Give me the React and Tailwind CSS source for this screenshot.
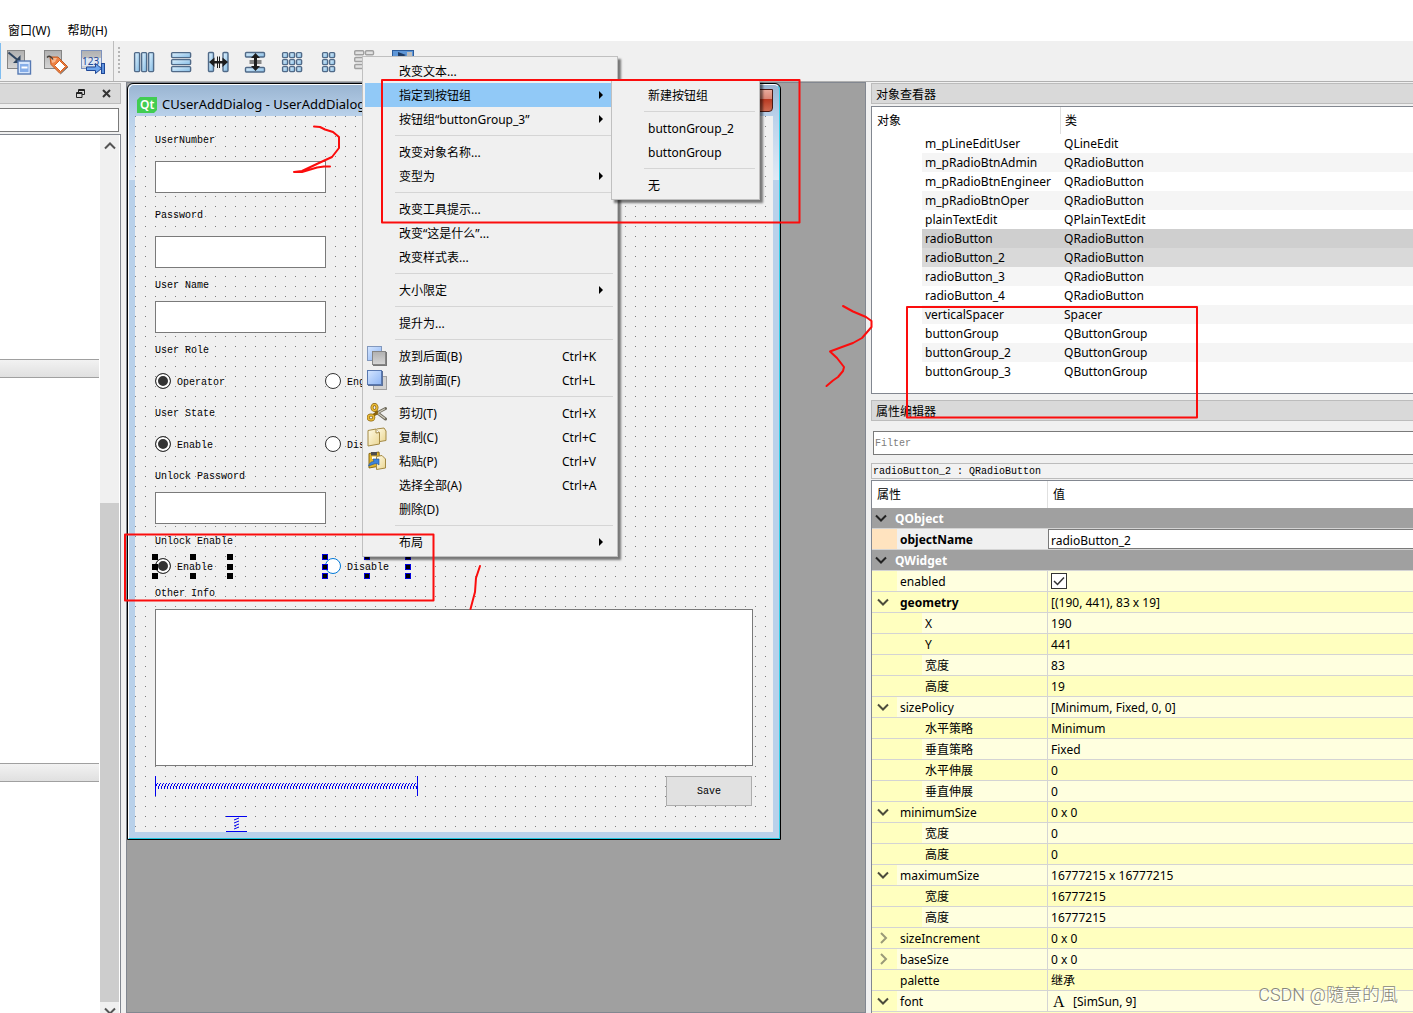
import React from 'react';

const objects = [
  ['m_pLineEditUser', 'QLineEdit'],
  ['m_pRadioBtnAdmin', 'QRadioButton'],
  ['m_pRadioBtnEngineer', 'QRadioButton'],
  ['m_pRadioBtnOper', 'QRadioButton'],
  ['plainTextEdit', 'QPlainTextEdit'],
  ['radioButton', 'QRadioButton', 'bg-[#cfcfcf]'],
  ['radioButton_2', 'QRadioButton', 'bg-[#d9d9d9]'],
  ['radioButton_3', 'QRadioButton'],
  ['radioButton_4', 'QRadioButton'],
  ['verticalSpacer', 'Spacer'],
  ['buttonGroup', 'QButtonGroup'],
  ['buttonGroup_2', 'QButtonGroup'],
  ['buttonGroup_3', 'QButtonGroup'],
];

const properties = [
  { name: 'enabled', check: true },
  { name: 'geometry', value: '[(190, 441), 83 x 19]', open: true, bold: true },
  { name: 'X', value: '190', child: true },
  { name: 'Y', value: '441', child: true },
  { name: '宽度', value: '83', child: true },
  { name: '高度', value: '19', child: true },
  { name: 'sizePolicy', value: '[Minimum, Fixed, 0, 0]', open: true },
  { name: '水平策略', value: 'Minimum', child: true },
  { name: '垂直策略', value: 'Fixed', child: true },
  { name: '水平伸展', value: '0', child: true },
  { name: '垂直伸展', value: '0', child: true },
  { name: 'minimumSize', value: '0 x 0', open: true },
  { name: '宽度', value: '0', child: true },
  { name: '高度', value: '0', child: true },
  { name: 'maximumSize', value: '16777215 x 16777215', open: true },
  { name: '宽度', value: '16777215', child: true },
  { name: '高度', value: '16777215', child: true },
  { name: 'sizeIncrement', value: '0 x 0', closed: true },
  { name: 'baseSize', value: '0 x 0', closed: true },
  { name: 'palette', value: '继承' },
  { name: 'font', value: '[SimSun, 9]', open: true, glyph: 'A' },
];

const contextMenu = [
  { text: '改变文本...' },
  { text: '指定到按钮组', sub: true, active: true },
  { text: '按钮组“buttonGroup_3”', sub: true },
  null,
  { text: '改变对象名称...' },
  { text: '变型为', sub: true },
  null,
  { text: '改变工具提示...' },
  { text: '改变“这是什么”...' },
  { text: '改变样式表...' },
  null,
  { text: '大小限定', sub: true },
  null,
  { text: '提升为...' },
  null,
  { text: '放到后面(B)', keys: 'Ctrl+K', icon: 'back' },
  { text: '放到前面(F)', keys: 'Ctrl+L', icon: 'front' },
  null,
  { text: '剪切(T)', keys: 'Ctrl+X', icon: 'cut' },
  { text: '复制(C)', keys: 'Ctrl+C', icon: 'copy' },
  { text: '粘贴(P)', keys: 'Ctrl+V', icon: 'paste' },
  { text: '选择全部(A)', keys: 'Ctrl+A' },
  { text: '删除(D)' },
  null,
  { text: '布局', sub: true },
];

const groupMenu = [
  { text: '新建按钮组' },
  null,
  { text: 'buttonGroup_2' },
  { text: 'buttonGroup' },
  null,
  { text: '无' },
];

/* ---------- icons ---------- */

function Gradients() {
  return (
    <svg className="absolute h-0 w-0" aria-hidden="true">
      <defs>
        <linearGradient id="blueBar" x1="0" y1="0" x2="1" y2="1">
          <stop offset="0" stopColor="#e2f4ff" />
          <stop offset="1" stopColor="#84bbe4" />
        </linearGradient>
        <linearGradient id="grayBox" x1="0" y1="0" x2="0" y2="1">
          <stop offset="0" stopColor="#b0b0b0" />
          <stop offset="1" stopColor="#d6d6d6" />
        </linearGradient>
        <linearGradient id="blueBox" x1="0" y1="0" x2="1" y2="1">
          <stop offset="0" stopColor="#d5e6ff" />
          <stop offset="1" stopColor="#8db5f5" />
        </linearGradient>
        <linearGradient id="paper" x1="0" y1="0" x2="1" y2="1">
          <stop offset="0" stopColor="#fffbe6" />
          <stop offset="1" stopColor="#ead591" />
        </linearGradient>
      </defs>
    </svg>
  );
}

function EditWidgetsIcon() {
  return (
    <svg width="25" height="25" viewBox="0 0 25 25">
      <rect x="0.500" y="0.500" width="17" height="18" fill="url(#grayBox)" stroke="#858585" />
      <path d="M1.500 2.500L10 9.500" stroke="#2f4560" strokeWidth="2" fill="none" />
      <path d="M13.500 13H6L13.500 5Z" fill="#2f4560" />
      <rect x="11" y="11" width="12.500" height="13" fill="#d7e7fd" stroke="#5679b3" strokeWidth="1.400" />
      <rect x="13" y="14" width="8.500" height="8" fill="#86aee9" />
      <path d="M14.500 17.500H20.500" stroke="#fff" strokeWidth="2" />
    </svg>
  );
}

function EditBuddiesIcon() {
  return (
    <svg width="25" height="25" viewBox="0 0 25 25">
      <rect x="0.500" y="0.500" width="17" height="18" fill="url(#grayBox)" stroke="#858585" />
      <path d="M6 7H14L23.500 16.500L16 23.500L7 14.500Z" fill="#ee8244" stroke="#c05a22" strokeLinejoin="round" />
      <path d="M7 8H13L11 12L8 13Z" fill="#f7b78f" />
      <path d="M10.500 15.500L15.500 10.500L21.500 16.500L16.500 21.500Z" fill="#fff" stroke="#d9611f" />
      <path d="M16.500 24L24 17" stroke="#6f6f6f" />
      <path d="M3 7.500C5 5.500 7 6 9 9.500" stroke="#453f3a" strokeWidth="1.500" fill="none" />
    </svg>
  );
}

function TabOrderIcon() {
  return (
    <svg width="25" height="25" viewBox="0 0 25 25">
      <rect x="0.500" y="0.500" width="20" height="18" fill="url(#grayBox)" stroke="#7d92bd" />
      <rect x="1" y="8" width="19" height="8" fill="#dfe7f2" />
      <text x="1" y="15" fontSize="10" fontFamily="Noto Sans, sans-serif" fill="#1f4796">123</text>
      <path d="M5.500 17H14.500V13.500L20.500 18.500L14.500 23.500V20.500H5.500Z" fill="#6ea5ec" stroke="#1f4796" />
      <rect x="20.500" y="13.500" width="3" height="10" fill="#5f93de" stroke="#1f4796" />
    </svg>
  );
}

function Bars({ rects }) {
  return (
    <svg width="24" height="24" viewBox="0 0 24 24">
      {rects.map(([x, y, w, h], i) => (
        <rect key={i} x={x + 0.6} y={y + 0.6} width={w - 1} height={h - 1} rx="1" fill="url(#blueBar)" stroke="#506a88" strokeWidth="1.400" />
      ))}
    </svg>
  );
}

const gridOf = (cols, rows) => cols.flatMap((x) => rows.map((y) => [x, y, 6, 6]));

function SplitterH() {
  return (
    <svg width="24" height="24" viewBox="0 0 24 24">
      {[2.5, 17].map((x) => (
        <rect key={x} x={x} y="2.500" width="5" height="19" rx="1" fill="url(#blueBar)" stroke="#506a88" strokeWidth="1.400" />
      ))}
      <path d="M3 12L8.500 7.500V11H11V6.500H12V11H13V6.500H14V11H16.500V7.500L22 12L16.500 17V13.500H14V18H13V13.500H12V18H11V13.500H8.500V17Z" fill="#1d1d1d" />
    </svg>
  );
}

function SplitterV() {
  return (
    <svg width="24" height="24" viewBox="0 0 24 24">
      {[2.5, 17.5].map((y) => (
        <rect key={y} x="2.500" y={y} width="19" height="4.500" rx="1" fill="url(#blueBar)" stroke="#506a88" strokeWidth="1.400" />
      ))}
      <path d="M12.500 3L17 8H14V10.500H18.500V11.500H14V12.500H18.500V13.500H14V16H17L12.500 21L8 16H11V13.500H6.500V12.500H11V11.500H6.500V10.500H11V8H8Z" fill="#1d1d1d" />
    </svg>
  );
}

function BreakLayoutIcon() {
  return (
    <svg width="24" height="24" viewBox="0 0 24 24" fill="#e2e2e2" stroke="#a0a0a0" strokeWidth="1.400">
      <rect x="0.700" y="0.700" width="9" height="4" rx="1" />
      <rect x="11.500" y="0.700" width="8" height="4" rx="1" />
      <rect x="0.700" y="7.500" width="9" height="4" rx="1" />
      <rect x="0.700" y="14.500" width="9" height="4" rx="1" />
    </svg>
  );
}

function AdjustSizeIcon() {
  return (
    <svg width="24" height="24" viewBox="0 0 24 24">
      <rect x="1.500" y="0.500" width="21" height="21" fill="#5f97d8" stroke="#2c5c9c" />
      <rect x="16" y="2" width="5" height="18" fill="#bdbdbd" />
      <path d="M7 2L15 5L7 9Z" fill="#1f3c66" />
    </svg>
  );
}

function MenuIcon({ name }) {
  if (name === 'back' || name === 'front') {
    return (
      <svg width="20" height="20" viewBox="0 0 20 20">
        {name === 'back' ? (
          <>
            <rect x="0.500" y="0.500" width="14" height="14" fill="url(#blueBox)" stroke="#8298bd" />
            <rect x="6" y="6" width="14" height="14" fill="#777" />
            <rect x="5.500" y="5.500" width="13" height="13" fill="url(#grayBox)" stroke="#858585" />
          </>
        ) : (
          <>
            <rect x="6.500" y="6.500" width="13" height="13" fill="#d2d2d2" stroke="#a0a0a0" />
            <rect x="1" y="1" width="15" height="15" fill="#5b7099" />
            <rect x="0.500" y="0.500" width="14" height="14" fill="url(#blueBox)" stroke="#5878b0" />
          </>
        )}
      </svg>
    );
  }
  if (name === 'cut') {
    return (
      <svg width="20" height="20" viewBox="0 0 20 20" fill="none">
        <path d="M9 10.500L18.500 5.500M10 9.500L18.500 16" stroke="#6e6a5c" strokeWidth="3" strokeLinecap="round" />
        <path d="M9.500 10.500L18 5.800M10.500 10L18 15.500" stroke="#d0cdbf" strokeWidth="1.200" />
        <path d="M10 11L8.500 6M10 10L5 13" stroke="#8a6410" strokeWidth="3" />
        <ellipse cx="7.500" cy="4.500" rx="2.500" ry="3" stroke="#8a6410" strokeWidth="3" />
        <ellipse cx="7.500" cy="4.500" rx="2.500" ry="3" stroke="#e8b938" strokeWidth="1.600" />
        <ellipse cx="4" cy="14.500" rx="2.800" ry="2.500" stroke="#8a6410" strokeWidth="3" />
        <ellipse cx="4" cy="14.500" rx="2.800" ry="2.500" stroke="#e8b938" strokeWidth="1.600" />
      </svg>
    );
  }
  if (name === 'copy') {
    return (
      <svg width="20" height="20" viewBox="0 0 20 20" stroke="#a48a45">
        <path d="M9.500 2L17 1L19 4V13.500L10 15Z" fill="url(#paper)" />
        <path d="M1 3.500L9 2L12.500 5.500V17L1 19Z" fill="url(#paper)" />
        <path d="M9 2V6L12.500 5.500" fill="#fff" />
      </svg>
    );
  }
  return (
    <svg width="20" height="20" viewBox="0 0 20 20">
      <path d="M2 2.500L12 1L13 15L2 17Z" fill="#e4b72c" stroke="#8a6a14" />
      <path d="M4 1H10V4.500H4Z" fill="#4d4d4d" />
      <path d="M5 5.500H10V8H5Z" fill="#fff" />
      <path d="M9.500 5.500L15 4.500L18.500 8V17L9.500 18.500Z" fill="url(#paper)" stroke="#a48a45" />
      <path d="M1.500 15C3 11 5 10.500 7 10.500L6 8H12V14L10 12.500C7 12.500 5 14 1.500 15Z" fill="#3d83dc" stroke="#1f559e" strokeWidth="0.600" />
    </svg>
  );
}

function Chevron({ closed, dark }) {
  return (
    <svg width="12" height="12" viewBox="0 0 12 12" fill="none" strokeWidth="2" stroke={closed ? '#9a9a78' : dark ? '#222' : '#4c4c3c'}>
      <path d={closed ? 'M4 1L9 6L4 11' : 'M1 3.500L6 8.500L11 3.500'} />
    </svg>
  );
}

/* ---------- menus ---------- */

function MenuPanel({ items, className }) {
  return (
    <ul className={`absolute border border-[#c0c0c0] bg-[#f0f0f0] p-[2px] shadow-[3px_3px_2px_rgba(0,0,0,0.5)] ${className}`}>
      {items.map((item, i) =>
        item ? (
          <li key={i}>
            <button type="button" className={`flex h-6 w-full items-center text-left ${item.active ? 'bg-[#91c9f7]' : ''}`}>
              <span className="flex w-[34px] shrink-0 pl-[2px]">{item.icon && <MenuIcon name={item.icon} />}</span>
              <span className="flex-1 pt-[2px] whitespace-nowrap">{item.text}</span>
              {item.keys && <span className="w-[53px] pt-[2px]">{item.keys}</span>}
              {item.sub && (
                <svg className="mr-[11px]" width="6" height="8" viewBox="0 0 6 8">
                  <path d="M1 0L5 4L1 8Z" fill="#000" />
                </svg>
              )}
            </button>
          </li>
        ) : (
          <li key={i} className="py-1 pr-[2px] pl-[30px]">
            <div className="h-px bg-[#d5d5d5]" />
          </li>
        )
      )}
    </ul>
  );
}

/* ---------- form preview ---------- */

function Handles({ color }) {
  return (
    <span className="absolute -inset-[3px] grid grid-cols-[6px_6px_6px] content-between justify-between">
      {[0, 1, 2, 3, 4, 5, 6, 7, 8].map((n) => (
        <i key={n} className={`h-[6px] w-[6px] ${n === 4 ? '' : `border bg-black ${color}`}`} />
      ))}
    </span>
  );
}

function Radio({ name, label, checked, className = '', handles, ring = 'border-[#333]' }) {
  return (
    <label className={`relative flex h-[19px] items-center gap-[6px] pb-px ${className}`}>
      <input
        type="radio"
        name={name}
        defaultChecked={checked}
        className={`h-4 w-4 appearance-none rounded-full border bg-white checked:bg-[#333] checked:shadow-[inset_0_0_0_2px_white] ${ring}`}
      />
      <span className="pt-[3px]">{label}</span>
      {handles && <Handles color={handles} />}
    </label>
  );
}

function Caption({ htmlFor, children, className = '' }) {
  const Tag = htmlFor ? 'label' : 'p';
  return (
    <Tag htmlFor={htmlFor} className={`block pt-[2px] leading-[14px] ${className}`}>
      {children}
    </Tag>
  );
}

function Field({ id, label, className = '', gap }) {
  return (
    <div className={`flex flex-col ${className} ${gap}`}>
      <Caption htmlFor={id}>{label}</Caption>
      <input id={id} className="h-8 w-[171px] border border-[#7a7a7a] bg-white px-1" />
    </div>
  );
}

function FormWindow() {
  return (
    <div className="w-[654px] rounded-t-md border border-black bg-[linear-gradient(#99b4d1_0,#b9d1ea_32px,#dfe9f5_96px,#b9d1ea_96px)]">
      <div className="rounded-t-md border-t border-r border-b border-l border-t-white border-r-[#35d0e8] border-b-[#1cc4dc] border-l-white px-[6px] pb-[6px]">
        <div className="flex h-[31px] items-center pt-2 pl-[2px]">
          <svg width="20" height="16" viewBox="0 0 20 16">
            <path d="M3 0H20V13L17 16H0V3Z" fill="#41cd52" />
            <text x="3" y="12" fontSize="12" fontWeight="600" fontFamily="Noto Sans, sans-serif" fill="#fff">Qt</text>
          </svg>
          <span className="ml-[5px] flex-1 text-[13px]">CUserAddDialog - UserAddDialog.ui</span>
          <button type="button" aria-label="Close" className="mb-2 h-[23px] w-[44px] rounded-b-sm border border-[#4a1a14] bg-[linear-gradient(#e9aa9c_0,#d98271_45%,#b93a22_45%,#cf6a50_100%)]" />
        </div>
        <form className="bg-[linear-gradient(transparent_1px,#f0f0f0_1px),linear-gradient(90deg,#808080_1px,#f0f0f0_1px)] bg-[size:10px_10px] pr-5 pl-5 pt-4 font-['Liberation_Mono','Noto_Sans_CJK_SC',monospace] text-[10px] leading-4">
          <Field id="userNumber" label="UserNumber" gap="gap-[13px]" />
          <Field id="password" label="Password" className="mt-[14px]" gap="gap-[13px]" />
          <Field id="userName" label="User Name" className="mt-[9px]" gap="gap-2" />

          <Caption className="mt-[9px]">User Role</Caption>
          <div className="mt-[14px] flex">
            <Radio name="role" label="Operator" checked className="w-[170px]" />
            <Radio name="role" label="Engineer" />
          </div>

          <Caption className="mt-[14px]">User State</Caption>
          <div className="mt-[14px] flex">
            <Radio name="state" label="Enable" checked className="w-[170px]" />
            <Radio name="state" label="Disable" />
          </div>

          <Field id="unlockPassword" label="Unlock Password" className="mt-[14px]" gap="gap-2" />

          <Caption className="mt-[9px]">Unlock Enable</Caption>
          <div className="mt-2 flex gap-[95px]">
            <Radio name="unlock" label="Enable" checked className="w-[75px]" handles="border-black" />
            <Radio name="unlock" label="Disable" className="w-[83px]" handles="border-[#0000e0]" ring="border-[#0078d7]" />
          </div>

          <Caption htmlFor="otherInfo" className="mt-[9px]">Other Info</Caption>
          <textarea id="otherInfo" className="mt-2 block h-[157px] w-full resize-none border border-[#7a7a7a] bg-white" />

          <div className="mt-[10px] flex items-start justify-between">
            <svg width="263" height="20" viewBox="0 0 263 20" stroke="#0000f0" fill="none">
              <defs>
                <pattern id="coil" width="3" height="6" patternUnits="userSpaceOnUse" patternTransform="translate(0 7)">
                  <path d="M0 3H1V6H0ZM1 1H2V3H1ZM2 0H3V1H2Z" fill="#0000f0" stroke="none" />
                </pattern>
              </defs>
              <rect x="0" y="7" width="263" height="6" fill="url(#coil)" stroke="none" />
              <path d="M0.500 0V20M262.500 0V20" />
            </svg>
            <button type="button" className="mr-px h-[30px] w-[86px] border border-[#adadad] bg-[#e1e1e1] pt-[2px]">Save</button>
          </div>
          <svg className="mt-[10px] ml-[71px] block" width="21" height="16" viewBox="0 0 21 16" stroke="#0000f0" fill="none">
            <path d="M0 0.500H21M0 15.500H21" />
            <path d="M13 2L8 4M13 5L8 7M13 8L8 10M13 11L8 13" />
          </svg>
        </form>
      </div>
    </div>
  );
}

/* ---------- docks ---------- */

function WidgetBox() {
  return (
    <aside className="flex w-[121px] shrink-0 flex-col pt-px">
      <div className="flex h-[21px] items-center justify-end gap-[17px] border border-l-0 border-[#bcbcbc] bg-[#d9d9d9] pr-[9px]">
        <button type="button" aria-label="Float">
          <svg width="9" height="9" viewBox="0 0 9 9" fill="none" stroke="#222">
            <path d="M2.500 3V0.500H8.500V5.500H6M2.500 1.500H8.500" />
            <path d="M0.500 3.500H6V8.500H0.500ZM0.500 4.500H6" />
          </svg>
        </button>
        <button type="button" aria-label="Close dock">
          <svg width="9" height="9" viewBox="0 0 9 9" stroke="#333" strokeWidth="2">
            <path d="M1 1L8 8M8 1L1 8" />
          </svg>
        </button>
      </div>
      <input aria-label="Filter widgets" className="mt-1 mr-[2px] h-6 border border-l-0 border-[#7a7a7a] bg-white" />
      <div className="mt-[2px] flex min-h-0 flex-1 border-t border-r border-[#828790] bg-white">
        <div className="w-[99px] pt-[224px]">
          <div className="h-[19px] border-y border-[#a0a0a0] bg-linear-to-b from-[#f2f2f2] to-[#e0e0e0]" />
          <div className="mt-[385px] h-[19px] border-y border-[#a0a0a0] bg-linear-to-b from-[#f2f2f2] to-[#e0e0e0]" />
        </div>
        <div className="ml-px flex w-[19px] flex-col items-center bg-[#f0f0f0]">
          <svg className="mt-[6px]" width="12" height="10" viewBox="0 0 12 10" fill="none" stroke="#555" strokeWidth="2">
            <path d="M1 7.500L6 2.500L11 7.500" />
          </svg>
          <div className="mt-[352px] w-full flex-1 bg-[#cdcdcd]" />
          <svg className="mt-[5px] shrink-0" width="12" height="6" viewBox="0 0 12 6" fill="none" stroke="#555" strokeWidth="2">
            <path d="M1 1.500L6 6.500L11 1.500" />
          </svg>
        </div>
      </div>
    </aside>
  );
}

function DockTitle({ children, className = '' }) {
  return (
    <h2 className={`flex h-[21px] shrink-0 items-center border border-r-0 border-[#bcbcbc] bg-[#d9d9d9] pt-[2px] pl-1 ${className}`}>
      {children}
    </h2>
  );
}

function ObjectInspector() {
  return (
    <div className="mt-[2px] shrink-0 border border-r-0 border-[#828790] bg-white pb-3">
      <table className="w-full table-fixed border-separate border-spacing-0 text-left">
        <colgroup>
          <col className="w-[50px]" />
          <col className="w-[139px]" />
          <col />
        </colgroup>
        <thead>
          <tr className="h-[27px]">
            <th colSpan={2} className="border-r border-[#e0e0e0] p-0 pl-[5px] font-normal">对象</th>
            <th className="p-0 pl-1 font-normal">类</th>
          </tr>
        </thead>
        <tbody>
          {objects.map(([name, cls, selected], i) => {
            const bg = selected || (i % 2 ? 'bg-[#f5f5f5]' : 'bg-white');
            return (
              <tr key={name} className="h-[19px] leading-[19px]">
                <td className="p-0" />
                <td className={`p-0 pl-[3px] ${bg}`}>{name}</td>
                <td className={`p-0 pl-[3px] ${bg}`}>{cls}</td>
              </tr>
            );
          })}
        </tbody>
      </table>
    </div>
  );
}

function GroupRow({ name }) {
  return (
    <tr className="h-[21px]">
      <td colSpan={4} className="border-b border-[#d4d4d4] bg-[#a0a0a0] p-0 font-bold text-white">
        <div className="flex h-5 items-center gap-[8px] pl-[3px]">
          <Chevron dark />
          <span className="pt-[2px]">{name}</span>
        </div>
      </td>
    </tr>
  );
}

function PropertyRow({ row, light }) {
  const bg = light ? 'bg-[#ffffdf]' : 'bg-[#ffffbf]';
  return (
    <tr className="h-[21px] leading-[18px]">
      <td colSpan={row.child ? 2 : 1} className="border-b border-[#d4d4d4] bg-[#ffffbf] p-0 pl-[5px]">
        {(row.open || row.closed) && <Chevron closed={row.closed} />}
      </td>
      <td colSpan={row.child ? 1 : 2} className={`border-r border-b border-[#d4d4d4] p-0 pt-[2px] pl-[3px] ${row.bold ? 'font-bold' : ''} ${bg}`}>
        {row.name}
      </td>
      <td className={`border-b border-[#d4d4d4] p-0 pl-[3px] ${bg}`}>
        {row.check ? (
          <span className="relative block h-4 w-4">
            <input type="checkbox" aria-label={row.name} defaultChecked className="block h-4 w-4 appearance-none border border-[#333] bg-white" />
            <svg className="pointer-events-none absolute inset-0" width="16" height="16" viewBox="0 0 16 16" fill="none" stroke="#333" strokeWidth="1.500">
              <path d="M3 8L6.500 11.500L13 4.500" />
            </svg>
          </span>
        ) : (
          <span className="flex pt-[2px]">
            {row.glyph && <span className="w-[22px] pl-[2px] font-['Liberation_Serif',serif] text-base leading-[18px]">{row.glyph}</span>}
            {row.value}
          </span>
        )}
      </td>
    </tr>
  );
}

function PropertyEditor() {
  return (
    <div className="mt-px min-h-0 flex-1 overflow-hidden border-t border-l border-[#828790] bg-white">
      <table className="w-full table-fixed border-separate border-spacing-0 text-left">
        <colgroup>
          <col className="w-[25px]" />
          <col className="w-[25px]" />
          <col className="w-[126px]" />
          <col />
        </colgroup>
        <thead>
          <tr className="h-[27px]">
            <th colSpan={3} className="border-r border-[#e0e0e0] p-0 pl-[5px] font-normal">属性</th>
            <th className="p-0 pl-[5px] font-normal">值</th>
          </tr>
        </thead>
        <tbody>
          <GroupRow name="QObject" />
          <tr className="h-[21px] leading-[18px]">
            <td className="border-b border-[#d4d4d4] bg-[#ffe3bf] p-0" />
            <td colSpan={2} className="border-b border-[#d4d4d4] bg-[#f0f0f0] p-0 pt-[2px] pl-[3px] font-bold">
              <label htmlFor="objectName">objectName</label>
            </td>
            <td className="border-b border-[#d4d4d4] p-0">
              <input id="objectName" defaultValue="radioButton_2" className="block h-5 w-full border border-r-0 border-[#7a7a7a] bg-white pt-[2px] pl-[2px]" />
            </td>
          </tr>
          <GroupRow name="QWidget" />
          {properties.map((row, i) => (
            <PropertyRow key={i} row={row} light={i % 2 === 0} />
          ))}
          <tr className="h-[21px] bg-[#ffffbf]">
            <td colSpan={4} />
          </tr>
        </tbody>
      </table>
    </div>
  );
}

/* red pen marks drawn over the window */
function PenMarks() {
  return (
    <svg className="pointer-events-none absolute top-0 left-0" width="1413" height="1013" viewBox="0 0 1413 1013" fill="none" stroke="#fb0d0d" strokeWidth="2" strokeLinejoin="round" strokeLinecap="round">
      <rect x="382" y="80" width="417.500" height="142.500" />
      <rect x="125" y="534.500" width="308.500" height="66" />
      <rect x="907" y="307" width="290" height="110.500" />
      <path d="M314 126.500L320 127L325 129.500L333 132L339 137V148L332 157L320 162.500L302 171L294 172H302L317 167.500L324 166.500H330" />
      <path d="M480 566L476 578L475 592L470.500 609" />
      <path d="M843 306L853 311.500L866 317L871.500 321V327L862 338L853 343L842 347L830 351.500L837 358L844 367L843 371L838 377L833 380.500L826.500 386" />
    </svg>
  );
}

export default function App() {
  return (
    <div className="relative flex h-screen flex-col overflow-hidden bg-[#f0f0f0] font-['Noto_Sans','Noto_Sans_CJK_SC',sans-serif] text-xs text-black">
      <Gradients />

      <nav className="flex h-[41px] shrink-0 items-end gap-[17px] bg-white pb-[2px] pl-2">
        <button type="button">窗口(W)</button>
        <button type="button">帮助(H)</button>
      </nav>

      <div className="flex h-[41px] shrink-0 items-stretch border-b border-[#b0b0b0]">
        <div className="my-[2px] w-px bg-[#7fbdf0]" />
        <div className="flex w-[113px] items-center gap-3 border-r border-[#bdbdbd] pt-[2px] pl-[6px]">
          <button type="button" aria-label="Edit widgets"><EditWidgetsIcon /></button>
          <button type="button" aria-label="Edit buddies"><EditBuddiesIcon /></button>
          <button type="button" aria-label="Edit tab order"><TabOrderIcon /></button>
        </div>
        <div className="my-[6px] ml-1 w-[2px] bg-[linear-gradient(#b5b5b5_2px,transparent_2px)] bg-[size:2px_4px]" />
        <div className="flex items-center gap-[13px] pt-[2px] pl-3">
          <button type="button" aria-label="Lay out horizontally"><Bars rects={[[2, 2, 6, 20], [9, 2, 6, 20], [16, 2, 6, 20]]} /></button>
          <button type="button" aria-label="Lay out vertically"><Bars rects={[[2, 2, 20, 6], [2, 9, 20, 6], [2, 16, 20, 6]]} /></button>
          <button type="button" aria-label="Horizontal splitter"><SplitterH /></button>
          <button type="button" aria-label="Vertical splitter"><SplitterV /></button>
          <button type="button" aria-label="Lay out in a grid"><Bars rects={gridOf([2, 9, 16], [2, 9, 16])} /></button>
          <button type="button" aria-label="Lay out in a form"><Bars rects={gridOf([5, 12], [2, 9, 16])} /></button>
          <button type="button" aria-label="Break layout"><BreakLayoutIcon /></button>
          <button type="button" aria-label="Adjust size"><AdjustSizeIcon /></button>
        </div>
      </div>

      <main className="flex min-h-0 flex-1">
        <WidgetBox />
        <section className="ml-[5px] min-w-0 flex-1 overflow-hidden border border-[#828790] bg-[#a0a0a0]">
          <FormWindow />
        </section>
        <aside className="ml-[5px] flex w-[542px] shrink-0 flex-col pt-px">
          <DockTitle>对象查看器</DockTitle>
          <ObjectInspector />
          <DockTitle className="mt-[6px]">属性编辑器</DockTitle>
          <input
            aria-label="Filter"
            placeholder="Filter"
            className="mt-[10px] ml-[2px] h-6 shrink-0 border border-r-0 border-[#7a7a7a] bg-white pl-px font-['Liberation_Mono',monospace] text-[10px] placeholder:text-[#7d7d7d]"
          />
          <p className="mt-2 h-4 shrink-0 border border-r-0 border-[#bcbcbc] bg-[#f2f2f2] pl-px font-['Liberation_Mono',monospace] text-[10px] leading-4">
            radioButton_2 : QRadioButton
          </p>
          <PropertyEditor />
        </aside>
      </main>

      <MenuPanel items={contextMenu} className="top-[56px] left-[362px] w-[256px]" />
      <MenuPanel items={groupMenu} className="top-[80px] left-[611px] w-[149px]" />
      <PenMarks />

      <p className="pointer-events-none absolute right-[15px] bottom-[6px] font-['Roboto','Noto_Sans_CJK_TC',sans-serif] text-lg leading-6 font-light text-[#85857a] [text-shadow:1px_1px_0_#fff]">
        CSDN @隨意的風
      </p>
    </div>
  );
}
